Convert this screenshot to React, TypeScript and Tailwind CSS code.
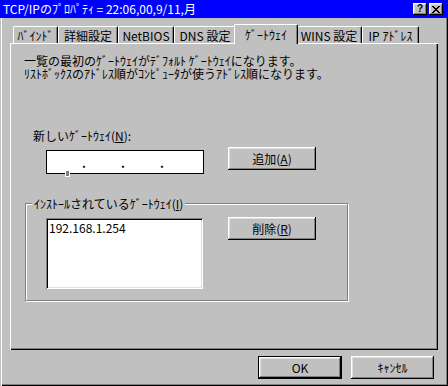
import React from "react";

const raised =
  "shadow-[inset_-1px_-1px_#000,inset_1px_1px_#fff,inset_-2px_-2px_#808080,inset_2px_2px_#dfdfdf]";

function Btn({ children, className = "" }: { children: React.ReactNode; className?: string }) {
  return (
    <div
      className={`flex items-center justify-center bg-[#c0c0c0] text-[12px] leading-[13px] ${raised} ${className}`}
    >
      {children}
    </div>
  );
}

function Tab({ label, w }: { label: string; w: string }) {
  return (
    <div
      className={`${w} h-[17px] flex items-center justify-center border-t border-l border-white border-r border-r-black rounded-tl-[2px] rounded-tr-[2px] shadow-[inset_-1px_0_#808080] text-[12px] leading-[13px] whitespace-nowrap`}
    >
      {label}
    </div>
  );
}

export default function App() {
  return (
    <div className="w-[448px] h-[386px] bg-[#c0c0c0] flex flex-col overflow-hidden text-black font-['Noto_Sans_CJK_JP',sans-serif] text-[12px]">
      {/* Title bar */}
      <div className="h-[18px] bg-[#0000ff] flex items-center pl-[3px] pr-[5px]">
        <span className="text-white text-[12px] leading-[18px] whitespace-nowrap">
          TCP/IPのﾌﾟﾛﾊﾟﾃｨ = 22:06,00,9/11,月
        </span>
        <div className="ml-auto flex gap-[2px]">
          <div className={`w-[14px] h-[12px] bg-[#c0c0c0] ${raised} flex items-center justify-center`}>
            <span className="text-[10px] leading-[10px] font-bold font-['Liberation_Sans',sans-serif]">?</span>
          </div>
          <div className={`w-[14px] h-[12px] bg-[#c0c0c0] ${raised} flex items-center justify-center`}>
            <svg width="8" height="7" viewBox="0 0 8 7" shapeRendering="crispEdges">
              <path d="M0 0h2v1h-2zM6 0h2v1h-2zM1 1h2v1h-2zM5 1h2v1h-2zM2 2h4v1h-4zM3 3h2v1h-2zM2 4h4v1h-4zM1 5h2v1h-2zM5 5h2v1h-2zM0 6h2v1h-2zM6 6h2v1h-2z" fill="#000" />
            </svg>
          </div>
        </div>
      </div>

      {/* Body */}
      <div className="flex-1 border-l border-l-[#c0c0c0] shadow-[inset_1px_0_#fff,inset_-1px_-1px_#000,inset_-2px_-2px_#808080] pl-[9px] pt-[6px]">
        {/* Tabs */}
        <div className="flex items-end h-[19px] ml-[3px]">
          <Tab label="ﾊﾞｲﾝﾄﾞ" w="w-[45px]" />
          <Tab label="詳細設定" w="w-[60px]" />
          <Tab label="NetBIOS" w="w-[56px]" />
          <Tab label="DNS 設定" w="w-[62px]" />
          <div className="relative z-10 w-[64px] h-[20px] -mx-[2px] -mb-[1px] bg-[#c0c0c0] flex justify-center pt-[3px] border-t border-l border-white border-r border-r-black rounded-tl-[2px] rounded-tr-[2px] shadow-[inset_-1px_0_#808080] leading-[13px] whitespace-nowrap">
            ｹﾞｰﾄｳｪｲ
          </div>
          <Tab label="WINS 設定" w="w-[66px]" />
          <Tab label="IP ｱﾄﾞﾚｽ" w="w-[57px]" />
        </div>

        {/* Panel */}
        <div className="w-[428px] h-[307px] shadow-[inset_1px_1px_#fff,inset_-1px_-1px_#000,inset_-2px_-2px_#808080] pt-[11px] pl-[14px]">
          <p className="leading-[13px] whitespace-nowrap">
            一覧の最初のｹﾞｰﾄｳｪｲがﾃﾞﾌｫﾙﾄ ｹﾞｰﾄｳｪｲになります。
            <br />
            ﾘｽﾄﾎﾞｯｸｽのｱﾄﾞﾚｽ順がｺﾝﾋﾟｭｰﾀが使うｱﾄﾞﾚｽ順になります。
          </p>

          <div className="ml-[9px] mt-[49px] leading-[13px]">
            新しいｹﾞｰﾄｳｪｲ(<span className="underline">N</span>):
          </div>

          <div className="flex items-start mt-[5px] ml-[22px]">
            <div className="relative mt-[3px] w-[158px] h-[24px] border border-black bg-white flex items-center">
              <span className="w-[35px]" />
              <span className="w-[4px] text-center font-bold leading-[13px]">.</span>
              <span className="w-[35px]" />
              <span className="w-[4px] text-center font-bold leading-[13px]">.</span>
              <span className="w-[35px]" />
              <span className="w-[4px] text-center font-bold leading-[13px]">.</span>
              <div className="absolute left-[19px] top-[20px] w-[3px] h-[5px] bg-[#808080] outline outline-1 outline-white" />
            </div>
            <Btn className="ml-[24px] w-[88px] h-[23px]">
              追加(<span className="underline">A</span>)
            </Btn>
          </div>

          {/* Group box */}
          <div className="relative mt-[29px] ml-[1px] w-[323px] h-[98px] border border-[#808080] shadow-[inset_1px_1px_#fff,1px_1px_#fff] pt-[13px] pl-[20px]">
            <span className="absolute left-[6px] -top-[7px] px-[2px] bg-[#c0c0c0] leading-[13px] whitespace-nowrap">
              ｲﾝｽﾄｰﾙされているｹﾞｰﾄｳｪｲ(<span className="underline">I</span>)
            </span>
            <div className="flex items-start">
              <div className="mt-[1px] w-[157px] h-[71px] bg-white shadow-[inset_1px_1px_#808080,inset_-1px_-1px_#fff,inset_2px_2px_#000,inset_-2px_-2px_#dfdfdf] pt-[3px] pl-[3px] leading-[13px]">
                192.168.1.254
              </div>
              <Btn className="ml-[25px] w-[88px] h-[23px]">
                削除(<span className="underline">R</span>)
              </Btn>
            </div>
          </div>
        </div>

        {/* Footer */}
        <div className="flex justify-end gap-[9px] pr-[14px] mt-[6px]">
          <div className="w-[84px] h-[23px] border border-black">
            <Btn className="w-full h-full">OK</Btn>
          </div>
          <Btn className="w-[83px] h-[23px]">ｷｬﾝｾﾙ</Btn>
        </div>
      </div>
    </div>
  );
}
